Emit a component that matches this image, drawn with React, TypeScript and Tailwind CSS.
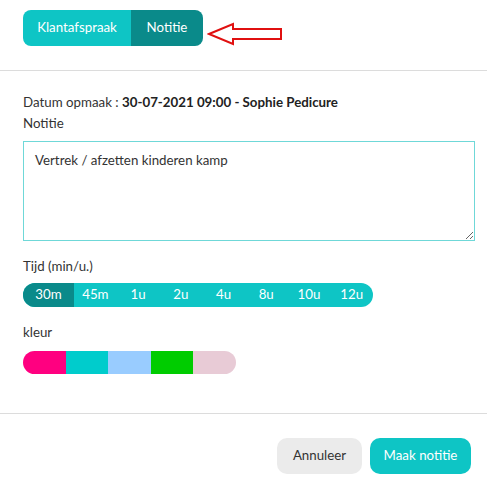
import React, { useState } from "react";

const times = ["30m", "45m", "1u", "2u", "4u", "8u", "10u", "12u"];
const colors = ["bg-[#ff0080]", "bg-[#00cccc]", "bg-[#99ccff]", "bg-[#00cc00]", "bg-[#e8cbd6]"];

const App = () => {
  const [tab, setTab] = useState(2);
  const [time, setTime] = useState(0);

  return (
    <div className="w-[487px] h-[487px] bg-white text-[#333] font-['Lato',sans-serif] text-[13.3px]">
      {/* tabs */}
      <div className="flex items-center px-[23px] pt-[10px] h-[71px] border-b border-[#dcdcdc]">
        <div className="flex h-[36px] rounded-[8px] overflow-hidden text-white text-[13.3px] self-start">
          <button
            onClick={() => setTab(1)}
            className={`w-[108px] ${tab === 1 ? "bg-[#0a8a8a]" : "bg-[#0ec5c5]"}`}
          >
            Klantafspraak
          </button>
          <button
            onClick={() => setTab(2)}
            className={`w-[72px] ${tab === 2 ? "bg-[#0a8a8a]" : "bg-[#0ec5c5]"}`}
          >
            Notitie
          </button>
        </div>
        <svg width="76" height="24" viewBox="0 0 76 24" className="ml-[4px] self-start mt-[12px]">
          <path
            d="M2 12 L26 2 L26 7 L74 7 L74 17 L26 17 L26 22 Z"
            fill="none"
            stroke="#e01010"
            strokeWidth="2"
          />
        </svg>
      </div>

      {/* body */}
      <div className="px-[23px] pt-[21px] pb-[39px] border-b border-[#dcdcdc]">
        <div className="leading-[21px]">
          Datum opmaak : <span className="font-bold text-[#222]">30-07-2021 09:00 - Sophie Pedicure</span>
        </div>
        <div className="leading-[21px]">Notitie</div>
        <textarea
          defaultValue="Vertrek / afzetten kinderen kamp"
          className="mt-[7px] block w-[452px] h-[100px] border border-[#6fd8d8] px-[11px] py-[9px] text-[13.3px] text-[#333] outline-none"
        />

        <div className="mt-[15px] leading-[20px]">Tijd (min/u.)</div>
        <div className="mt-[7px] flex w-[350px] h-[24px] rounded-full overflow-hidden bg-[#0ec5c5] text-white text-[13.3px]">
          {times.map((t, i) => (
            <button
              key={t}
              onClick={() => setTime(i)}
              className={`h-full ${i === 0 ? "w-[51px]" : "flex-1"} ${time === i ? "bg-[#0a8a8a]" : ""}`}
            >
              {t}
            </button>
          ))}
        </div>

        <div className="mt-[15px] leading-[20px]">kleur</div>
        <div className="mt-[9px] flex w-[213px] h-[23px] rounded-full overflow-hidden">
          {colors.map((c) => (
            <div key={c} className={`flex-1 ${c}`} />
          ))}
        </div>
      </div>

      {/* footer */}
      <div className="flex justify-end gap-[8px] pt-[24px] pr-[16px]">
        <button className="w-[85px] h-[36px] rounded-[10px] bg-[#ebebeb] text-[#333]">Annuleer</button>
        <button className="w-[101px] h-[36px] rounded-[10px] bg-[#0ec5c5] text-white">Maak notitie</button>
      </div>
    </div>
  );
};

export default App;
